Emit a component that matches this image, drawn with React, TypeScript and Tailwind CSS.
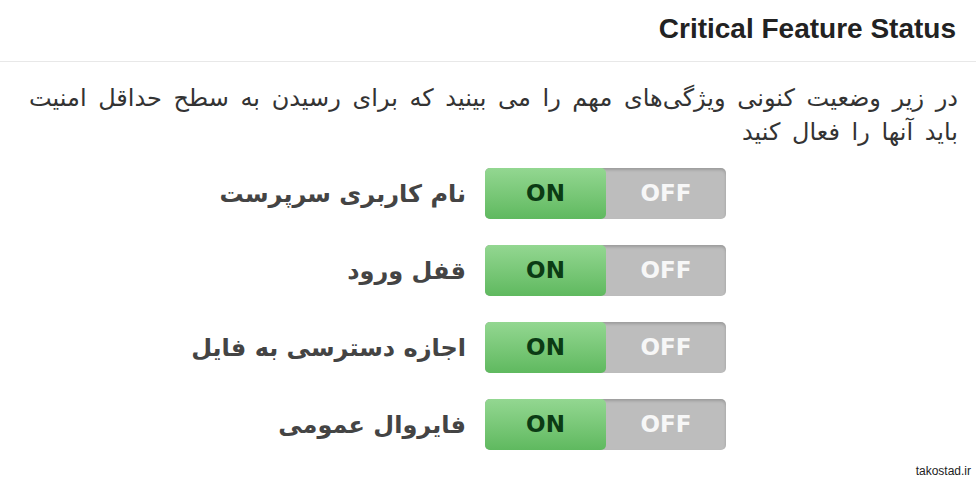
const features = [
  "نام کاربری سرپرست",
  "قفل ورود",
  "اجازه دسترسی به فایل",
  "فایروال عمومی",
];

function Toggle() {
  return (
    <div className="flex h-[51px] w-[241px] rounded-[5px] bg-[#bdbdbd] shadow-[inset_0_2px_3px_rgba(0,0,0,0.18)]">
      <div className="flex w-[121px] items-center justify-center rounded-[5px] bg-gradient-to-b from-[#93d791] to-[#5fb95f] text-[23px] font-bold text-[#0b3b14]">
        ON
      </div>
      <div className="flex flex-1 items-center justify-center text-[23px] font-bold text-[#f7f7f7]">
        OFF
      </div>
    </div>
  );
}

export default function App() {
  return (
    <div className="h-[477px] w-[976px] bg-white text-[#333]" style={{ fontFamily: '"DejaVu Sans", sans-serif' }}>
      {/* Header */}
      <div className="flex h-[62px] items-center justify-end border-b border-[#e8e8e8] pr-[20px]">
        <h2 className="pb-[4px] text-[28px] font-bold text-[#222]" style={{ fontFamily: '"Liberation Sans", Arial, sans-serif' }}>
          Critical Feature Status
        </h2>
      </div>

      {/* Description */}
      <p dir="rtl" className="px-[18px] pt-[19px] text-[24px] leading-[34px] text-[#333] [word-spacing:4px]">
        در زیر وضعیت کنونی ویژگی‌های مهم را می بینید که برای رسیدن به سطح حداقل امنیت باید آنها را فعال کنید
      </p>

      {/* Rows */}
      <div className="mt-[19px] flex flex-col gap-[26px]">
        {features.map((f) => (
          <div key={f} className="flex items-center">
            <div dir="rtl" className="w-[466px] text-right text-[24px] font-bold text-[#444]">
              {f}
            </div>
            <div className="ml-[19px]">
              <Toggle />
            </div>
          </div>
        ))}
      </div>

      <div className="mt-[12px] pr-[5px] text-right text-[12px] text-[#222]" style={{ fontFamily: '"Liberation Sans", Arial, sans-serif' }}>
        takostad.ir
      </div>
    </div>
  );
}
